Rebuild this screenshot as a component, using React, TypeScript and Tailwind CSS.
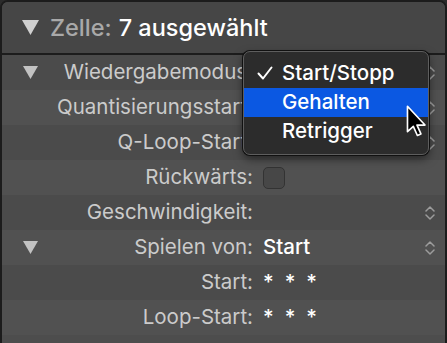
import React from "react";

const Tri = () => (
  <svg width="15" height="13" viewBox="0 0 15 13" className="shrink-0">
    <polygon points="0,0 15,0 7.5,13" fill="#c2c2c2" />
  </svg>
);

const Stepper = () => (
  <svg width="10" height="16" viewBox="0 0 10 16" className="shrink-0">
    <path d="M1 6 L5 2 L9 6" fill="none" stroke="#9c9c9c" strokeWidth="1.5" strokeLinecap="round" strokeLinejoin="round" />
    <path d="M1 10 L5 14 L9 10" fill="none" stroke="#9c9c9c" strokeWidth="1.5" strokeLinecap="round" strokeLinejoin="round" />
  </svg>
);

type RowProps = {
  label: string;
  tri?: boolean;
  dark?: boolean;
  stepper?: boolean;
  children?: React.ReactNode;
};

const Row = ({ label, tri, dark, stepper, children }: RowProps) => (
  <div className={`flex h-[35px] items-center ${dark ? "bg-[#4b4b4b]" : "bg-[#515151]"}`}>
    <div className="flex w-[251px] items-center pl-[21px]">
      {tri && <Tri />}
      <span className="ml-auto whitespace-nowrap text-[20.5px] text-[#cbcbcb]">{label}</span>
    </div>
    <div className="flex flex-1 items-center pl-[10px] text-[20.5px] font-medium text-white">{children}</div>
    {stepper && (
      <div className="mr-[10px]">
        <Stepper />
      </div>
    )}
  </div>
);

export default function App() {
  return (
    <div
      className="relative h-[343px] w-[447px] overflow-hidden bg-[#2b2b2b]"
      style={{ fontFamily: "Inter, 'Noto Sans', sans-serif" }}
    >
      <div className="h-[360px] w-[447px] rounded-t-[8px] border-2 border-[#1c1c1c] bg-[#4d4d4d]">
        <div className="flex h-[51px] items-center rounded-t-[6px] bg-[#464646] pl-[20px]">
          <svg width="17" height="15" viewBox="0 0 17 15" className="shrink-0">
            <polygon points="0,0 17,0 8.5,15" fill="#d0d0d0" />
          </svg>
          <span className="ml-[11px] text-[23.5px] font-medium text-[#a9a9a9]">Zelle:</span>
          <span className="ml-[7px] text-[23.5px] font-medium text-white">7 ausgewählt</span>
        </div>
        <div className="h-[2px] bg-[#1c1c1c]" />
        <Row label="Wiedergabemodus:" tri dark stepper />
        <Row label="Quantisierungsstart:" stepper />
        <Row label="Q-Loop-Start:" dark stepper />
        <Row label="Rückwärts:">
          <div className="h-[22px] w-[22px] rounded-[5px] border border-[#333] bg-[#474747]" />
        </Row>
        <Row label="Geschwindigkeit:" dark stepper />
        <Row label="Spielen von:" tri stepper>
          Start
        </Row>
        <Row label="Start:" dark>
          <span className="tracking-[11px]">***</span>
        </Row>
        <Row label="Loop-Start:">
          <span className="tracking-[11px]">***</span>
        </Row>
      </div>

      {/* popup menu */}
      <div className="absolute left-[243px] top-[51px] h-[104px] w-[186px] overflow-hidden rounded-[7px] border border-[#5e5e5e] bg-[#2c2c2c] py-[6px] shadow-[0_0_0_1px_#111,0_4px_10px_rgba(0,0,0,0.5)]">
        <div className="flex h-[30px] items-center text-[20.5px] font-medium text-white">
          <span className="flex w-[38px] justify-end pr-[9px]">
            <svg width="16" height="14" viewBox="0 0 16 14">
              <path d="M1.5 7.5 L6 12.5 L14.5 1.5" fill="none" stroke="#ffffff" strokeWidth="2" strokeLinecap="round" strokeLinejoin="round" />
            </svg>
          </span>
          Start/Stopp
        </div>
        <div className="flex h-[29px] items-center bg-[#0b58e2] pl-[38px] text-[20.5px] font-medium text-white">Gehalten</div>
        <div className="flex h-[29px] items-center pl-[38px] text-[20.5px] font-medium text-white">Retrigger</div>
      </div>

      {/* cursor */}
      <svg
        className="absolute left-[406px] top-[105px]"
        width="22"
        height="33"
        viewBox="-1 -1 17 26"
      >
        <path
          d="M0 0 L0 20 L4.6 15.8 L7.8 23 L10.6 21.8 L7.5 14.8 L13.8 14.8 Z"
          fill="#000"
          stroke="#fff"
          strokeWidth="1.3"
          strokeLinejoin="round"
        />
      </svg>
    </div>
  );
}
